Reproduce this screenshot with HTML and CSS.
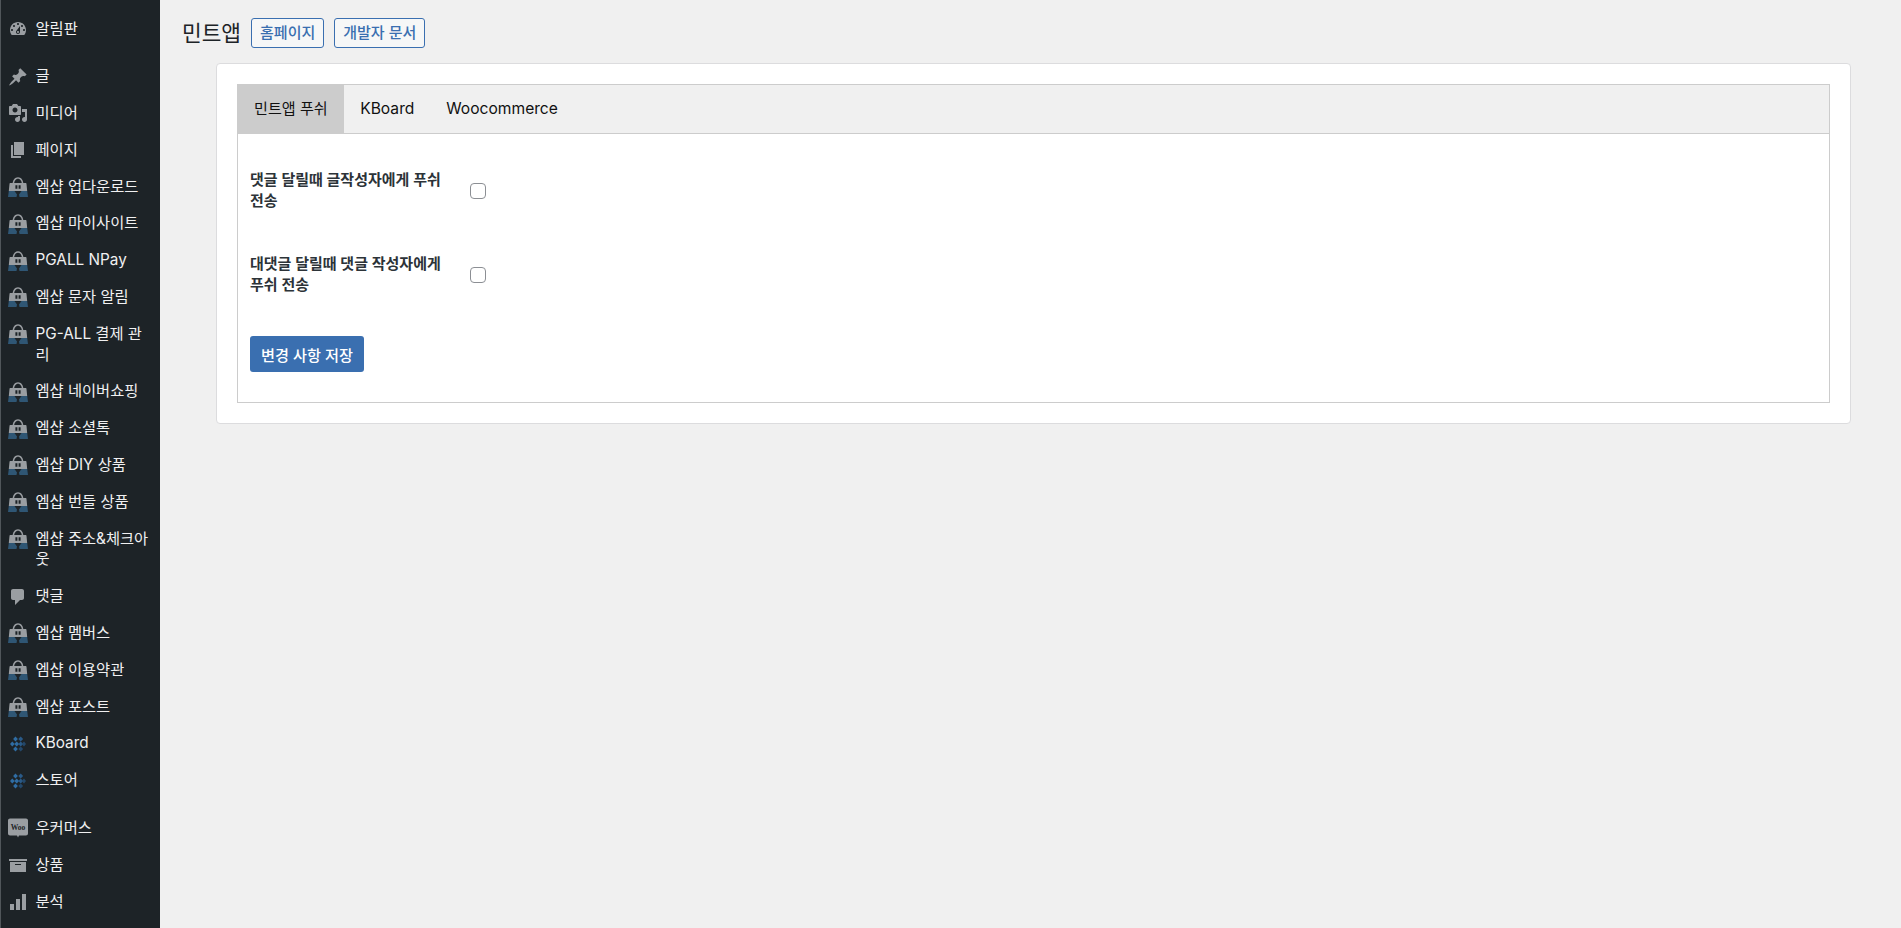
FILE: index.html
```html
<!DOCTYPE html>
<html lang="ko">
<head>
	<meta charset="utf-8">
	<title>민트앱</title>
	<link rel="stylesheet" href="styles.css">
</head>
<body>

<svg class="defs" aria-hidden="true">
	<symbol id="i-dash" viewBox="0 0 20 20"><path fill-rule="evenodd" d="M3.76 16h12.48c1.1-1.37 1.76-3.11 1.76-5 0-4.42-3.58-8-8-8s-8 3.58-8 8c0 1.89.66 3.63 1.76 5zM10 4c.55 0 1 .45 1 1s-.45 1-1 1-1-.45-1-1 .45-1 1-1zM6 6c.55 0 1 .45 1 1s-.45 1-1 1-1-.45-1-1 .45-1 1-1zm8 0c.55 0 1 .45 1 1s-.45 1-1 1-1-.45-1-1 .45-1 1-1zm-5.37 5.55L12 7v6c0 1.1-.9 2-2 2s-2-.9-2-2c0-.57.24-1.08.63-1.45zM4 10c.55 0 1 .45 1 1s-.45 1-1 1-1-.45-1-1 .45-1 1-1zm12 0c.55 0 1 .45 1 1s-.45 1-1 1-1-.45-1-1 .45-1 1-1zm-5 3c0-.55-.45-1-1-1s-1 .45-1 1 .45 1 1 1 1-.45 1-1z"/></symbol>
	<symbol id="i-pin" viewBox="0 0 20 20"><path d="M10.44 3.02l1.82-1.82 6.36 6.35-1.83 1.82c-1.05-.68-2.48-.57-3.41.36l-.75.75c-.92.93-1.04 2.35-.35 3.41l-1.83 1.82-2.41-2.41-2.8 2.79c-.42.42-3.38 2.71-3.8 2.29s1.86-3.39 2.28-3.81l2.79-2.79L4.1 9.36l1.83-1.82c1.05.69 2.48.57 3.4-.36l.75-.75c.93-.92 1.05-2.35.36-3.41z"/></symbol>
	<symbol id="i-media" viewBox="0 0 20 20"><path fill-rule="evenodd" d="M13 11V4c0-.55-.45-1-1-1h-1.67L9 1H5L3.67 3H2c-.55 0-1 .45-1 1v7c0 .55.45 1 1 1h10c.55 0 1-.45 1-1zM7 4.5c1.38 0 2.5 1.12 2.5 2.5S8.38 9.5 7 9.5 4.5 8.38 4.5 7 5.62 4.5 7 4.5zM14 6h5v10.5c0 1.38-1.12 2.5-2.5 2.5S14 17.88 14 16.5s1.12-2.5 2.5-2.5c.17 0 .34.02.5.05V9h-3V6zm-4 8.05V13h2v3.5c0 1.38-1.12 2.5-2.5 2.5S7 17.88 7 16.5 8.12 14 9.5 14c.17 0 .34.02.5.05z"/></symbol>
	<symbol id="i-page" viewBox="0 0 20 20"><path d="M6 15V2h10v13H6zm-1 1h8v2H3V5h2v11z"/></symbol>
	<symbol id="i-comment" viewBox="0 0 20 20"><path d="M5 2h9c1.1 0 2 .9 2 2v7c0 1.1-.9 2-2 2h-2l-5 5v-5H5c-1.1 0-2-.9-2-2V4c0-1.1.9-2 2-2z"/></symbol>
	<symbol id="i-archive" viewBox="0 0 20 20"><path fill-rule="evenodd" d="M19 4v2H1V4h18zM2 7h16v10H2V7zm11 3V9H7v1h6z"/></symbol>
	<symbol id="i-chart" viewBox="0 0 20 20"><path d="M18 18V2h-4v16h4zm-6 0V7H8v11h4zm-6 0v-6H2v6h4z"/></symbol>
	<symbol id="i-shop" viewBox="0 0 20 20">
		<path d="M4.500 8C4.500 3 7 .3 10 .3S15.500 3 15.500 8H14C14 4.200 12.300 1.800 10 1.800S6 4.200 6 8z" fill="#9a9ea2"/>
		<path d="M1.500 7c0-.6.400-1 1-1h15c.6 0 1 .4 1 1l.7 7H.8z" fill="#9a9ea2"/>
		<path d="M.8 14h5.700L9 17.500 8.500 20H0zM19.200 14h-5.700L11 17.500l.5 2.500H20z" fill="#2f5674"/>
		<path d="M7.400 8.300h2v3.500h-2zM10.600 8.300h2v3.500h-2z" fill="#1d2327"/>
	</symbol>
	<symbol id="i-board" viewBox="0 0 16 16">
		<path d="M5.500 .6l2.400 2.400-2.400 2.400L3.100 3zM2.300 5.600L4.700 8l-2.400 2.400L-.1 8zM6.700 5.600L9.100 8l-2.400 2.400L4.300 8zM5.500 10.600l2.400 2.400-2.400 2.400L3.100 13z" fill="#2f6ca3"/>
		<path d="M10.700 .6L13.100 3l-2.400 2.400L8.300 3zM10.700 5.600L13.100 8l-2.400 2.400L8.300 8z" fill="#2a5a88"/>
		<path d="M14 5.600L16 8l-2 2.400L11.600 8zM10.700 10.600l2.400 2.400-2.400 2.400L8.300 13z" fill="#24486a"/>
	</symbol>
</svg>

<div class="side">
	<ul class="menu">
		<li class="sep"><svg class="ico"><use href="#i-dash"/></svg><span>알림판</span></li>
		<li><svg class="ico"><use href="#i-pin"/></svg><span>글</span></li>
		<li><svg class="ico"><use href="#i-media"/></svg><span>미디어</span></li>
		<li><svg class="ico"><use href="#i-page"/></svg><span>페이지</span></li>
		<li><svg class="ico"><use href="#i-shop"/></svg><span>엠샵 업다운로드</span></li>
		<li><svg class="ico"><use href="#i-shop"/></svg><span>엠샵 마이사이트</span></li>
		<li><svg class="ico"><use href="#i-shop"/></svg><span>PGALL NPay</span></li>
		<li><svg class="ico"><use href="#i-shop"/></svg><span>엠샵 문자 알림</span></li>
		<li><svg class="ico"><use href="#i-shop"/></svg><span>PG-ALL 결제 관리</span></li>
		<li><svg class="ico"><use href="#i-shop"/></svg><span>엠샵 네이버쇼핑</span></li>
		<li><svg class="ico"><use href="#i-shop"/></svg><span>엠샵 소셜톡</span></li>
		<li><svg class="ico"><use href="#i-shop"/></svg><span>엠샵 DIY 상품</span></li>
		<li><svg class="ico"><use href="#i-shop"/></svg><span>엠샵 번들 상품</span></li>
		<li><svg class="ico"><use href="#i-shop"/></svg><span>엠샵 주소&amp;체크아웃</span></li>
		<li><svg class="ico"><use href="#i-comment"/></svg><span>댓글</span></li>
		<li><svg class="ico"><use href="#i-shop"/></svg><span>엠샵 멤버스</span></li>
		<li><svg class="ico"><use href="#i-shop"/></svg><span>엠샵 이용약관</span></li>
		<li><svg class="ico"><use href="#i-shop"/></svg><span>엠샵 포스트</span></li>
		<li><svg class="ico small"><use href="#i-board"/></svg><span>KBoard</span></li>
		<li class="sep"><svg class="ico small"><use href="#i-board"/></svg><span>스토어</span></li>
		<li><svg class="ico" viewBox="0 0 20 20"><path d="M2 .5h16c1.100 0 2 .9 2 2v13c0 1.100-.9 2-2 2h-7L10 19.500 9 17.500H2c-1.100 0-2-.9-2-2v-13c0-1.100.9-2 2-2z"/><text class="woo" x="10" y="11.500" text-anchor="middle">Woo</text></svg><span>우커머스</span></li>
		<li><svg class="ico"><use href="#i-archive"/></svg><span>상품</span></li>
		<li><svg class="ico"><use href="#i-chart"/></svg><span>분석</span></li>
	</ul>
</div>

<div class="main">
	<div class="head">
		<h1>민트앱</h1>
		<a class="link">홈페이지</a>
		<a class="link">개발자 문서</a>
	</div>

	<div class="card">
		<div class="wrap">
			<ul class="tabs">
				<li class="on">민트앱 푸쉬</li>
				<li>KBoard</li>
				<li>Woocommerce</li>
			</ul>
			<div class="panel">
				<div class="row">
					<label>댓글 달릴때 글작성자에게 푸쉬 전송</label>
					<input type="checkbox" class="chk">
				</div>
				<div class="row">
					<label>대댓글 달릴때 댓글 작성자에게 푸쉬 전송</label>
					<input type="checkbox" class="chk">
				</div>
				<button class="save">변경 사항 저장</button>
			</div>
		</div>
	</div>
</div>

</body>
</html>
```

FILE: styles.css
```css
html,body{
	height:100%;
}
body{
	margin:0; background:#f0f0f0; overflow:hidden;
	display:flex;
	font-family:"Inter","Noto Sans CJK KR",sans-serif; font-size:14px; color:#1d2327;
}
ul,li{
	margin:0; padding:0; list-style:none;
}
.defs{
	position:absolute; width:0; height:0;
}

/*sidebar*/
.side{
	width:159px; flex:none; background:#1d2327;
	border-left:1px solid #50565a;
	padding-top:10.5px;
}
.menu li{
	display:flex; align-items:flex-start;
	padding:8px 10px 8px 7px;
	font-size:15.3px; color:#f0f0f1; line-height:20.8px;
}
.menu li.sep{
	margin-bottom:11px;
}
.menu span{
	margin-left:7.5px; min-width:0; word-break:break-all;
}
.ico{
	width:20px; height:20px; flex:none; margin:.4px 0 0;
	fill:#9a9ea2;
}
.ico.small{
	width:16px; height:16px; margin:2.4px 2px 0;
}
.woo{
	font-family:"Liberation Serif",serif; font-size:7.5px; font-weight:bold; fill:#1d2327;
}

/*main*/
.main{
	flex:1; min-width:0;
	padding:18px 50px 0 22px;
}
.head{
	display:flex; align-items:center; gap:10px;
	height:30px;
}
.head h1{
	margin:0;
	font-size:21.4px; font-weight:400; line-height:30px; color:#1d2327;
}
.link{
	height:28px; padding:0 8px;
	background:#f6f7f7; border:1px solid #3a6fb0; border-radius:3px;
	font-size:15px; font-weight:500; line-height:28px; color:#3a6fb0;
}
.card{
	margin:15px 0 0 34px; padding:20px;
	background:#fff; border:1px solid #dcdcde; border-radius:4px;
}
.wrap{
	border:1px solid #ccc;
}
.tabs{
	display:flex;
	height:48px; background:#f0f0f0; border-bottom:1px solid #ccc;
}
.tabs li{
	padding:0 16px;
	font-size:15.6px; line-height:48px; color:#111;
}
.tabs li.on{
	background:#ccc;
	padding:0 16.500px 0 16px;
	font-size:15.1px;
}
.panel{
	padding:15px 12px 30px;
}
.row{
	display:flex; align-items:center;
	padding:19.5px 0;
}
.row label{
	width:200px; margin:0 20px 3px 0; flex:none;
	font-size:15px; font-weight:600; line-height:21px; color:#2c3338; word-break:keep-all;
}
.chk{
	appearance:none;
	width:16px; height:16px; margin:0;
	background:#fff; border:1px solid #8c8f94; border-radius:4px;
}
.save{
	display:block; margin-top:19px;
	height:36px; padding:0 11px;
	background:#3a6fb0; border:0; border-radius:3px;
	font-family:inherit; font-size:15.2px; font-weight:500; color:#fff;
}
```
